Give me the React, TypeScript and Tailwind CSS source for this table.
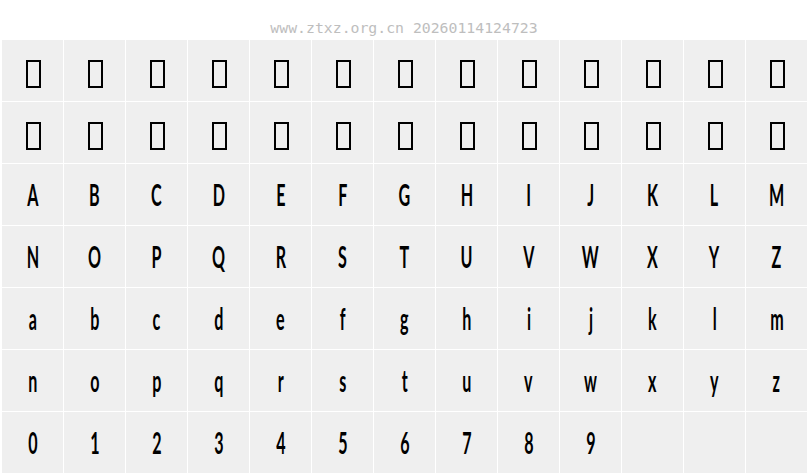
const upper = "ABCDEFGHIJKLMNOPQRSTUVWXYZ".split("");
const lower = "abcdefghijklmnopqrstuvwxyz".split("");
const digits = "0123456789".split("");

// 26 missing-glyph cells, then letters, then digits padded to fill the last row
const cells: (string | null)[] = [
  ...Array(26).fill(null),
  ...upper,
  ...lower,
  ...digits,
  "",
  "",
  "",
];

function Tofu() {
  return <div className="mt-[7px] ml-[2px] h-[28px] w-[15px] border-2 border-black" />;
}

export default function App() {
  return (
    <div className="h-[476px] w-[808px] bg-white">
      <div className="flex h-[40px] items-start justify-center pt-[21px]">
        <span className="font-['DejaVu_Sans_Mono',monospace] text-[14.8px] leading-[14px] text-[#bebebe]">
          www.ztxz.org.cn 20260114124723
        </span>
      </div>
      <div className="ml-[2px] grid grid-cols-[repeat(13,61px)] grid-rows-[repeat(7,61px)] gap-px">
        {cells.map((c, i) => (
          <div key={i} className="flex items-center justify-center bg-[#efefef]">
            {c === null ? (
              <Tofu />
            ) : (
              <span className="inline-block scale-x-[0.52] font-['Lato',sans-serif] text-[31px] font-bold leading-none text-black">
                {c}
              </span>
            )}
          </div>
        ))}
      </div>
    </div>
  );
}
